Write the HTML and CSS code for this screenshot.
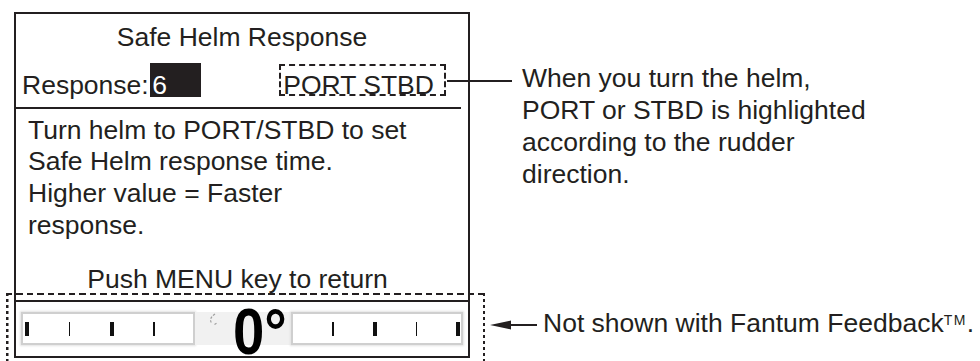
FILE: index.html
```html
<!DOCTYPE html>
<html lang="en">
<head>
  <meta charset="UTF-8" />
  <meta name="viewport" content="width=device-width, initial-scale=1.0" />
  <title>Safe Helm Response</title>
  <link rel="stylesheet" href="styles.css">
</head>
<body>

  <div class="figure">
    <div class="screen">
      <div class="title">Safe Helm Response</div>

      <div class="response-row">
        <span class="label">Response:</span>
        <span class="value">6</span>
        <span class="sides">PORT STBD</span>
      </div>

      <div class="rule"></div>

      <p class="help">Turn helm to PORT/STBD to set<br>Safe Helm response time.<br>Higher value = Faster<br>response.</p>

      <div class="hint">Push MENU key to return</div>

      <div class="rule rule-full"></div>

      <div class="rudder">
        <div class="scale scale-port">
          <i class="tick thick"></i><i class="tick"></i><i class="tick thick"></i><i class="tick"></i>
        </div>
        <div class="dial">
          <svg class="dial-icon" viewBox="0 0 12 13" width="12" height="13">
            <path d="M8 1 Q1 6 5 10.5 M7.5 11.5 L10.5 9.5" fill="none" stroke="#a0a0a0" stroke-width="1.2" stroke-dasharray="2.4 1.6" />
          </svg>
          <span class="angle">0°</span>
        </div>
        <div class="scale scale-stbd">
          <i class="tick"></i><i class="tick thick"></i><i class="tick"></i><i class="tick thick"></i>
        </div>
      </div>
    </div>

    <div class="notes">
      <p class="note note-helm">When you turn the helm,<br>PORT or STBD is highlighted<br>according to the rudder<br>direction.</p>
      <div class="note note-feedback">
        <svg class="arrow" viewBox="0 0 47 10" width="47" height="10">
          <polygon points="0,5 21,0.5 21,9.5" fill="#231f20" />
          <rect x="20" y="4" width="27" height="2" fill="#231f20" />
        </svg>
        <span>Not shown with Fantum Feedback<sup class="tm">TM</sup>.</span>
      </div>
    </div>

    <!-- callouts drawn over the screen -->
    <span class="leader"></span>
    <span class="feedback-frame"></span>
  </div>

</body>
</html>
```

FILE: styles.css
```css
* {
  box-sizing: border-box;
}

body {
  margin: 0;
  width: 980px;
  height: 361px;
  overflow: hidden;
  background: #fff;
  color: #231f20;
  font-family: "Liberation Sans", Arial, sans-serif;
  font-size: 26.5px;
  line-height: 32px;
}

p {
  margin: 0;
}

.figure {
  position: relative;
  display: flex;
  align-items: flex-start;
  height: 361px;
}

/* the display screen */

.screen {
  width: 456px;
  margin: 12px 0 0 14px;
  padding-top: 7px;
  border: 2px solid #231f20;
  display: flex;
  flex-direction: column;
}

.title {
  text-align: center;
}

.response-row {
  display: flex;
  align-items: baseline;
  margin-top: 10px;
  padding-left: 6px;
}

.value {
  width: 51px;
  margin-left: 1.5px;
  padding: 9.6px 0 0 2px;
  line-height: 24.4px;
  background: #231f20;
  color: #fff;
}

.sides {
  margin-left: 78px;
  padding: 9.6px 10px 0 2px;
  line-height: 18.4px;
  border: 2px dashed #231f20;
}

.rule {
  height: 2px;
  margin: 6.2px 7px 0 0;
  background: #231f20;
}

.rule-full {
  margin: 5px 0 0 0;
}

.help {
  margin-top: 6px;
  padding-left: 12px;
  line-height: 31.7px;
}

.hint {
  margin-top: 21px;
  padding-right: 9px;
  text-align: center;
}

/* rudder indicator strip */

.rudder {
  display: flex;
  align-items: center;
  height: 54px;
  padding: 0 5px;
}

.scale {
  flex-shrink: 0;
  display: flex;
  align-items: center;
  gap: 39.5px;
  width: 174px;
  height: 33px;
  padding: 0 2px;
  background: #fff;
  border: 2px solid #cfcfcf;
  box-shadow: 0 0 2px 1px #e2e2e2;
}

.scale-stbd {
  width: 172px;
  gap: 39px;
  justify-content: flex-end;
  padding: 0 1px 0 0;
}

.tick {
  width: 1.5px;
  height: 14px;
  background: #111;
}

.tick.thick {
  width: 4px;
}

.dial {
  flex-shrink: 0;
  display: flex;
  width: 96px;
  height: 54px;
  background: linear-gradient(#f1f1f1, #f1f1f1) center / 100% 33px no-repeat;
}

.dial-icon {
  flex-shrink: 0;
  margin: 11px 0 0 12px;
}

.angle {
  flex-shrink: 0;
  height: 54px;
  margin-left: 14px;
  font-size: 64px;
  font-weight: bold;
  line-height: 60px;
  color: #000;
  transform: scaleX(0.88);
  transform-origin: left;
}

/* annotations on the right */

.notes {
  display: flex;
  flex-direction: column;
  margin-left: 20px;
}

.note-helm {
  margin: 62px 0 0 32px;
}

.note-feedback {
  display: flex;
  align-items: center;
  margin-top: 116.8px;
  white-space: nowrap;
}

.arrow {
  flex-shrink: 0;
  margin: 4px 6px 0 0;
}

.tm {
  font-size: 14px;
  line-height: 0;
  vertical-align: 7px;
  letter-spacing: 1.5px;
}

.leader {
  position: absolute;
  left: 447px;
  top: 80px;
  width: 65px;
  height: 2px;
  background: #231f20;
}

.feedback-frame {
  position: absolute;
  left: 6px;
  top: 293px;
  width: 479px;
  height: 68px;
  background:
    repeating-linear-gradient(90deg, #231f20 0 6.5px, transparent 6.5px 10.5px) top left / 100% 2px no-repeat,
    repeating-linear-gradient(180deg, #231f20 0 3.5px, transparent 3.5px 6px) top left / 2.5px 100% no-repeat,
    repeating-linear-gradient(180deg, #231f20 0 3.5px, transparent 3.5px 6px) top right / 2.5px 100% no-repeat;
}
```
